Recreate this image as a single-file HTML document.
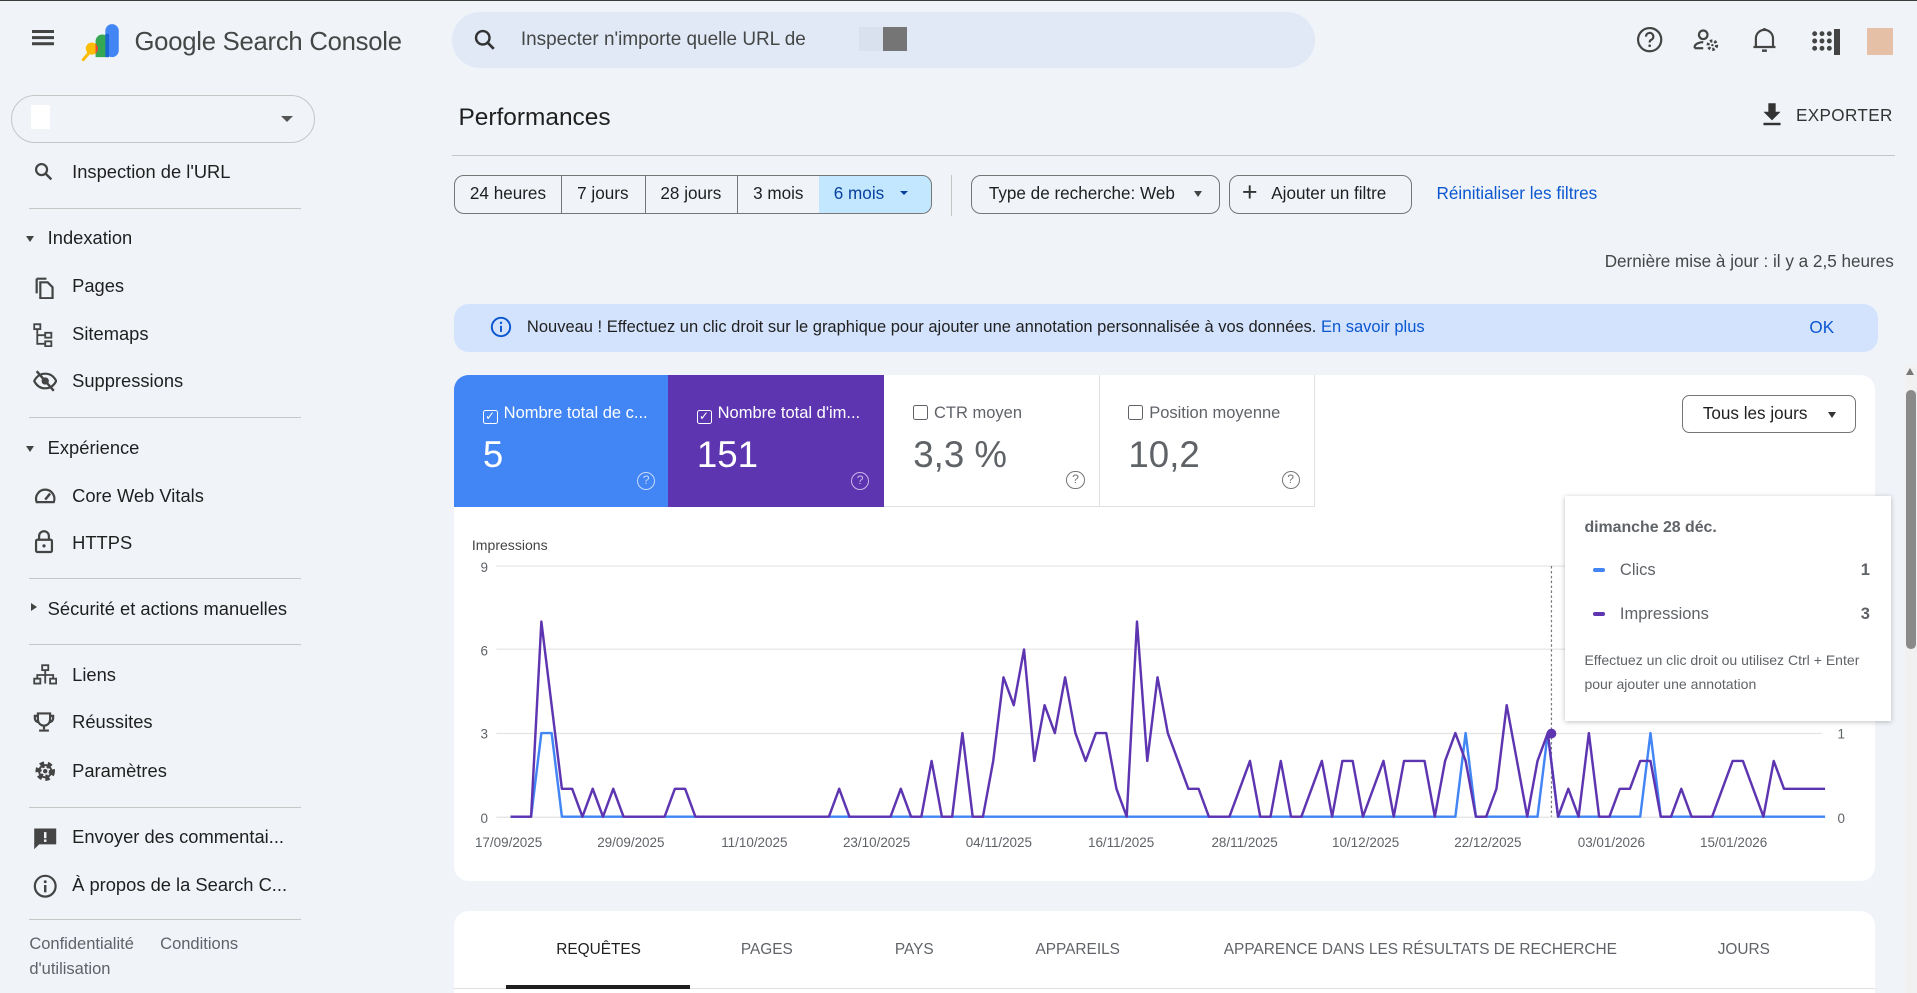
<!DOCTYPE html>
<html><head><meta charset="utf-8">
<style>
*{box-sizing:border-box;margin:0;padding:0}
html,body{width:1917px;height:993px;overflow:hidden;background:#f0f4f9}
#w{width:1568px;height:812px;zoom:1.22258;position:relative;font-family:"Liberation Sans",Arial,sans-serif;color:#1f1f1f;background:#f0f4f9;border-top:1px solid #3c3c3c}
.a{position:absolute}
.nav{position:absolute;left:59px;font-size:15px;color:#1f1f1f}
.ic{position:absolute;left:27px}
.hr{position:absolute;left:24px;width:222px;height:1px;background:#c7c7c7}
.seg{position:absolute;top:143px;height:32px;border:1px solid #747775;font-size:14px;line-height:30px;text-align:center;color:#1f1f1f}
.tile{position:absolute;top:307px;height:108px;width:177px}
.tile .l{position:absolute;left:24px;top:24px;font-size:13.5px}
.tile .v{position:absolute;left:24px;top:48px;font-size:30px}
.tile .q{position:absolute;right:12px;bottom:14px;width:15px;height:15px;border:1.5px solid;border-radius:50%;font-size:10px;text-align:center;line-height:12px}
.cb{display:inline-block;width:12px;height:12px;border:1.5px solid;border-radius:2px;vertical-align:-1px;margin-right:5px;font-size:10px;line-height:9px;text-align:center}
.tab{position:absolute;top:769px;font-size:12.6px;color:#5f6368;font-weight:500}
</style></head><body><div id="w">
<div class="a" style="left:26px;top:24px;width:18px;height:2px;background:#444;box-shadow:0 5px 0 #444,0 10px 0 #444"></div>
<svg class="a" style="left:62px;top:14px" width="40" height="38" viewBox="62 14 40 38">
<rect x="86" y="19" width="11" height="27" rx="5.5" fill="#4285f4"/>
<path d="M78 33a5.5 5.5 0 0 1 11 0v13h-11z" fill="#34a853"/>
<rect x="86" y="27" width="3" height="19" fill="#1967d2"/>
<line x1="74" y1="41" x2="68" y2="48" stroke="#fbbc04" stroke-width="2.5" stroke-linecap="round"/>
<circle cx="75" cy="39" r="5" fill="#fbbc04"/>
<path d="M78 35a5 5 0 0 1 0 8z" fill="#ea4335"/>
</svg>
<div class="a" style="left:110px;top:22px;font-size:21px;color:#444746;letter-spacing:-0.2px">Google Search Console</div>
<div class="a" style="left:370px;top:9px;width:706px;height:46px;border-radius:23px;background:#e1e9f7"></div>
<svg class="a" style="left:387px;top:22px" width="20" height="20" viewBox="0 0 20 20"><circle cx="8" cy="8" r="5.5" fill="none" stroke="#333" stroke-width="2"/><line x1="12" y1="12" x2="17" y2="17" stroke="#333" stroke-width="2.2"/></svg>
<div class="a" style="left:426px;top:23px;font-size:15.5px;color:#444746">Inspecter n'importe quelle URL de</div>
<div class="a" style="left:703px;top:21px;width:19px;height:20px;background:#d9e1ee"></div>
<div class="a" style="left:722px;top:21px;width:20px;height:20px;background:#757575"></div>
<svg class="a" style="left:1337px;top:20px" width="24" height="24" viewBox="0 0 24 24"><circle cx="12" cy="12" r="9.5" fill="none" stroke="#444" stroke-width="1.8"/><path d="M9 9.5a3 3 0 1 1 4 2.8c-.8.4-1 1-1 2" fill="none" stroke="#444" stroke-width="1.8"/><circle cx="12" cy="17" r="1.1" fill="#444"/></svg>
<svg class="a" style="left:1383px;top:20px" width="26" height="24" viewBox="0 0 26 24"><circle cx="10" cy="8" r="3.5" fill="none" stroke="#444" stroke-width="1.8"/><path d="M3 19v-1c0-2.5 4-4 7-4" fill="none" stroke="#444" stroke-width="1.8"/><path d="M3 19h7" stroke="#444" stroke-width="1.8"/><circle cx="17.5" cy="16.5" r="3.5" fill="none" stroke="#444" stroke-width="2.5" stroke-dasharray="2 1.6"/><circle cx="17.5" cy="16.5" r="1" fill="#444"/></svg>
<svg class="a" style="left:1432px;top:20px" width="22" height="24" viewBox="0 0 22 24"><path d="M4 18V11a7 7 0 0 1 14 0v7zM2 18h18" fill="none" stroke="#444" stroke-width="1.8"/><path d="M9 21h4" stroke="#444" stroke-width="2"/><path d="M11 4V2.5" stroke="#444" stroke-width="2"/></svg>
<svg class="a" style="left:1481px;top:24px" width="20" height="20" viewBox="0 0 20 20" fill="#444"><circle cx="3" cy="3" r="2"/><circle cx="9" cy="3" r="2"/><circle cx="15" cy="3" r="2"/><circle cx="3" cy="9" r="2"/><circle cx="9" cy="9" r="2"/><circle cx="15" cy="9" r="2"/><circle cx="3" cy="15" r="2"/><circle cx="9" cy="15" r="2"/><circle cx="15" cy="15" r="2"/></svg>
<div class="a" style="left:1500px;top:23px;width:5px;height:21px;background:#444"></div>
<div class="a" style="left:1527px;top:22px;width:21px;height:22px;background:#e5bfa6"></div>
<div class="a" style="left:9px;top:77px;width:249px;height:39px;border:1px solid #c4c7c5;border-radius:20px"></div>
<div class="a" style="left:25px;top:85px;width:16px;height:20px;background:#fff"></div>
<div class="a" style="left:230px;top:94px;border:5px solid transparent;border-top:5px solid #555"></div>
<svg class="ic" style="top:131px" width="18" height="18" viewBox="0 0 18 18"><circle cx="7" cy="7" r="4.5" fill="none" stroke="#444" stroke-width="1.8"/><line x1="10.5" y1="10.5" x2="15" y2="15" stroke="#444" stroke-width="2"/></svg>
<div class="nav" style="top:131px">Inspection de l'URL</div>
<div class="hr" style="top:169px"></div>
<div class="a" style="left:21px;top:192px;border:4px solid transparent;border-top:5px solid #444"></div>
<div class="nav" style="left:39px;top:185px">Indexation</div>
<svg class="ic" style="top:224px" width="18" height="20" viewBox="0 0 18 20"><path d="M3 3v12M3 3h8" fill="none" stroke="#444" stroke-width="1.8"/><path d="M6 6h6l4 4v9H6z" fill="none" stroke="#444" stroke-width="1.8"/></svg>
<div class="nav" style="top:224px">Pages</div>
<svg class="ic" style="top:263px" width="18" height="20" viewBox="0 0 18 20"><rect x="1" y="1" width="5" height="4" fill="none" stroke="#444" stroke-width="1.5"/><rect x="10" y="8" width="5" height="4" fill="none" stroke="#444" stroke-width="1.5"/><rect x="10" y="15" width="5" height="4" fill="none" stroke="#444" stroke-width="1.5"/><path d="M3.5 5v12H10M3.5 10H10" fill="none" stroke="#444" stroke-width="1.5"/></svg>
<div class="nav" style="top:263px">Sitemaps</div>
<svg class="ic" style="top:302px" width="20" height="18" viewBox="0 0 20 18"><path d="M1 9c2-4 5-6 9-6s7 2 9 6c-2 4-5 6-9 6s-7-2-9-6z" fill="none" stroke="#444" stroke-width="1.8"/><circle cx="10" cy="9" r="3" fill="#444"/><line x1="3" y1="1" x2="17" y2="17" stroke="#444" stroke-width="2"/></svg>
<div class="nav" style="top:302px">Suppressions</div>
<div class="hr" style="top:340px"></div>
<div class="a" style="left:21px;top:364px;border:4px solid transparent;border-top:5px solid #444"></div>
<div class="nav" style="left:39px;top:357px">Expérience</div>
<svg class="ic" style="top:396px" width="20" height="18" viewBox="0 0 20 18"><path d="M3 14a7.5 7.5 0 1 1 14 0z" fill="none" stroke="#444" stroke-width="1.8"/><path d="M10 12l4-5" stroke="#444" stroke-width="2"/></svg>
<div class="nav" style="top:396px">Core Web Vitals</div>
<svg class="ic" style="top:433px" width="18" height="20" viewBox="0 0 18 20"><path d="M5 8V5a4 4 0 0 1 8 0v3" fill="none" stroke="#444" stroke-width="1.8"/><rect x="2.5" y="8" width="13" height="10" rx="1" fill="none" stroke="#444" stroke-width="1.8"/><circle cx="9" cy="13" r="1.3" fill="#444"/></svg>
<div class="nav" style="top:434px">HTTPS</div>
<div class="hr" style="top:472px"></div>
<div class="a" style="left:25px;top:492px;border:4px solid transparent;border-left:5px solid #444"></div>
<div class="nav" style="left:39px;top:488px">Sécurité et actions manuelles</div>
<div class="hr" style="top:526px"></div>
<svg class="ic" style="top:542px" width="20" height="18" viewBox="0 0 20 18"><rect x="7.5" y="1" width="5" height="4" fill="none" stroke="#444" stroke-width="1.5"/><rect x="1" y="12" width="5" height="4" fill="none" stroke="#444" stroke-width="1.5"/><rect x="14" y="12" width="5" height="4" fill="none" stroke="#444" stroke-width="1.5"/><path d="M10 5v4M3.5 12V9h13v3M10 9v7" fill="none" stroke="#444" stroke-width="1.5"/></svg>
<div class="nav" style="top:542px">Liens</div>
<svg class="ic" style="top:581px" width="18" height="18" viewBox="0 0 18 18"><path d="M4 2h10v5a5 5 0 0 1-10 0zM4 4H1.5v2a3 3 0 0 0 3 3M14 4h2.5v2a3 3 0 0 1-3 3M9 12v3M5 16h8" fill="none" stroke="#444" stroke-width="1.8"/></svg>
<div class="nav" style="top:581px">Réussites</div>
<svg class="ic" style="top:620px" width="20" height="20" viewBox="0 0 20 20"><circle cx="10" cy="10" r="5.5" fill="none" stroke="#444" stroke-width="5" stroke-dasharray="3 2.5"/><circle cx="10" cy="10" r="5" fill="none" stroke="#444" stroke-width="1.6"/><circle cx="10" cy="10" r="1.8" fill="#444"/></svg>
<div class="nav" style="top:621px">Paramètres</div>
<div class="hr" style="top:659px"></div>
<svg class="ic" style="top:675px" width="20" height="20" viewBox="0 0 20 20"><path d="M1 2h18v13H5l-4 4z" fill="#444"/><rect x="9" y="5" width="2" height="5" fill="#f0f4f9"/><rect x="9" y="11" width="2" height="2" fill="#f0f4f9"/></svg>
<div class="nav" style="top:675px">Envoyer des commentai...</div>
<svg class="ic" style="top:714px" width="20" height="20" viewBox="0 0 20 20"><circle cx="10" cy="10" r="8.5" fill="none" stroke="#444" stroke-width="1.8"/><rect x="9" y="9" width="2" height="6" fill="#444"/><circle cx="10" cy="6.3" r="1.2" fill="#444"/></svg>
<div class="nav" style="top:714px">À propos de la Search C...</div>
<div class="hr" style="top:751px"></div>
<div class="a" style="left:24px;top:764px;font-size:13.5px;color:#5f6368">Confidentialité</div>
<div class="a" style="left:131px;top:764px;font-size:13.5px;color:#5f6368">Conditions</div>
<div class="a" style="left:24px;top:784px;font-size:13.5px;color:#5f6368">d'utilisation</div>
<div class="a" style="left:375px;top:84px;font-size:20px;color:#1f1f1f">Performances</div>
<svg class="a" style="left:1440px;top:83px" width="18" height="20" viewBox="0 0 18 20"><path d="M6 1h6v7h4l-7 7-7-7h4z" fill="#333"/><rect x="2" y="17" width="14" height="2" fill="#333"/></svg>
<div class="a" style="left:1469px;top:86px;font-size:14px;color:#333;letter-spacing:.3px">EXPORTER</div>
<div class="a" style="left:370px;top:126px;width:1180px;height:1px;background:#c4c7c5"></div>
<div class="seg" style="left:371px;width:89px;border-radius:8px 0 0 8px;top:142px">24 heures</div>
<div class="seg" style="left:459px;width:69px;border-left:none;top:142px">7 jours</div>
<div class="seg" style="left:527px;width:77px;border-left:none;top:142px">28 jours</div>
<div class="seg" style="left:603px;width:68px;border-left:none;top:142px">3 mois</div>
<div class="seg" style="left:670px;width:92px;border-left:none;border-radius:0 8px 8px 0;background:#c2e7ff;color:#0842a0;text-align:left;padding-left:12px;top:142px">6 mois<span style="position:absolute;left:66px;top:13px;border:4px solid transparent;border-top:4px solid #0842a0"></span></div>
<div class="a" style="left:778px;top:142px;width:1px;height:34px;background:#c4c7c5"></div>
<div class="seg" style="left:794px;width:204px;border-radius:8px;text-align:left;padding-left:14px;top:142px">Type de recherche: Web<span style="position:absolute;left:182px;top:13px;border:4px solid transparent;border-top:5px solid #444"></span></div>
<div class="seg" style="left:1005px;width:150px;border-radius:8px;text-align:left;padding-left:34px;top:142px"><span style="position:absolute;left:10px;top:-1px;font-size:22px;color:#333">+</span>Ajouter un filtre</div>
<div class="a" style="left:1175px;top:150px;font-size:14px;color:#0b57d0">Réinitialiser les filtres</div>
<div class="a" style="right:19px;top:205px;font-size:14px;color:#444746">Dernière mise à jour : il y a 2,5 heures</div>
<div class="a" style="left:371px;top:248px;width:1165px;height:39px;border-radius:12px;background:#d3e3fd"></div>
<svg class="a" style="left:401px;top:258px" width="18" height="18" viewBox="0 0 18 18"><circle cx="9" cy="9" r="7.5" fill="none" stroke="#0b57d0" stroke-width="1.6"/><rect x="8.2" y="8" width="1.6" height="5" fill="#0b57d0"/><circle cx="9" cy="5.6" r="1" fill="#0b57d0"/></svg>
<div class="a" style="left:431px;top:259px;font-size:13.5px;color:#1f1f1f">Nouveau ! Effectuez un clic droit sur le graphique pour ajouter une annotation personnalisée à vos données. <span style="color:#0b57d0">En savoir plus</span></div>
<div class="a" style="left:1480px;top:259px;font-size:14px;color:#0b57d0">OK</div>
<div class="a" style="left:371px;top:306px;width:1163px;height:414px;border-radius:12px;background:#fff"></div>
<div class="tile" style="left:371px;top:306px;background:#4285f4;color:#fff;border-radius:12px 0 0 0"><div class="l"><span class="cb" style="border-color:#fff">✓</span>Nombre total de c...</div><div class="v">5</div><div class="q" style="color:#c6dafc">?</div></div>
<div class="tile" style="left:546px;top:306px;background:#5e35b1;color:#fff"><div class="l"><span class="cb" style="border-color:#fff">✓</span>Nombre total d'im...</div><div class="v">151</div><div class="q" style="color:#c7b6e8">?</div></div>
<div class="tile" style="left:723px;top:306px;border-right:1px solid #e0e0e0;border-bottom:1px solid #e0e0e0;color:#5f6368"><div class="l"><span class="cb" style="border-color:#5f6368"></span>CTR moyen</div><div class="v">3,3 %</div><div class="q" style="color:#777">?</div></div>
<div class="tile" style="left:899px;top:306px;border-right:1px solid #e0e0e0;border-bottom:1px solid #e0e0e0;color:#5f6368"><div class="l"><span class="cb" style="border-color:#5f6368"></span>Position moyenne</div><div class="v">10,2</div><div class="q" style="color:#777">?</div></div>
<div class="a" style="left:1376px;top:322px;width:142px;height:31px;border:1px solid #747775;border-radius:6px;font-size:14px;line-height:29px;padding-left:16px">Tous les jours<span style="position:absolute;left:118px;top:13px;border:4px solid transparent;border-top:5px solid #333"></span></div>
<svg class="a" style="left:0;top:-1px" width="1568" height="812">
<g font-family="Liberation Sans, Arial, sans-serif" font-size="11" fill="#5f6368">
<text x="386" y="450" font-size="11.5" fill="#444">Impressions</text>
<text x="1492" y="450" fill="#ddd">Clics</text>
<text x="393" y="468">9</text><text x="393" y="536">6</text><text x="393" y="604">3</text><text x="393" y="673">0</text>
<text x="1503" y="468" fill="#ccc">3</text><text x="1503" y="604">1</text><text x="1503" y="673">0</text>
<g text-anchor="middle">
<text x="416" y="693">17/09/2025</text><text x="516" y="693">29/09/2025</text><text x="617" y="693">11/10/2025</text><text x="717" y="693">23/10/2025</text><text x="817" y="693">04/11/2025</text><text x="917" y="693">16/11/2025</text><text x="1018" y="693">28/11/2025</text><text x="1117" y="693">10/12/2025</text><text x="1217" y="693">22/12/2025</text><text x="1318" y="693">03/01/2026</text><text x="1418" y="693">15/01/2026</text>
</g></g>
<g stroke="#e3e3e3" stroke-width="1"><line x1="406" y1="463" x2="1490" y2="463"/><line x1="406" y1="531" x2="1490" y2="531"/><line x1="406" y1="600" x2="1490" y2="600"/><line x1="406" y1="668.5" x2="1490" y2="668.5"/></g>
<line x1="1269" y1="463" x2="1269" y2="668" stroke="#777" stroke-dasharray="2 2"/>
<polyline id="pc" fill="none" stroke="#4285f4" stroke-width="2" stroke-linejoin="round"/>
<polyline id="pi" fill="none" stroke="#5e35b1" stroke-width="2" stroke-linejoin="round"/>
<circle cx="1269" cy="600" r="4" fill="#5e35b1"/>
</svg>
<div class="a" style="left:1280px;top:405px;width:267px;height:184px;background:#fff;box-shadow:0 1px 4px rgba(0,0,0,.25);font-size:13.5px;color:#5f6368">
<div class="a" style="left:16px;top:19px;font-weight:bold;font-size:13px">dimanche 28 déc.</div>
<div class="a" style="left:23px;top:59px;width:10px;height:3px;border-radius:2px;background:#4285f4"></div>
<div class="a" style="left:45px;top:53px">Clics</div><div class="a" style="left:242px;top:53px;font-weight:bold">1</div>
<div class="a" style="left:23px;top:95px;width:10px;height:3px;border-radius:2px;background:#5e35b1"></div>
<div class="a" style="left:45px;top:89px">Impressions</div><div class="a" style="left:242px;top:89px;font-weight:bold">3</div>
<div class="a" style="left:16px;top:124px;font-size:11.5px;line-height:20px">Effectuez un clic droit ou utilisez Ctrl + Enter<br>pour ajouter une annotation</div>
</div>
<div class="a" style="left:1558px;top:298px;width:10px;height:514px;background:#f1f1f1"></div>
<div class="a" style="left:1559px;top:318px;width:8px;height:212px;border-radius:4px;background:#8a8a8a"></div>
<div class="a" style="left:1559px;top:300px;border:4px solid transparent;border-bottom:6px solid #777;border-top:none"></div>
<div class="a" style="left:371px;top:744px;width:1163px;height:80px;border-radius:12px;background:#fff"></div>
<div class="a" style="left:371px;top:807px;width:1163px;height:1px;background:#e0e0e0"></div>
<div class="tab" style="left:455px;color:#1f1f1f">REQUÊTES</div>
<div class="a" style="left:414px;top:805px;width:150px;height:3px;background:#1f1f1f"></div>
<div class="tab" style="left:606px">PAGES</div>
<div class="tab" style="left:732px">PAYS</div>
<div class="tab" style="left:847px">APPAREILS</div>
<div class="tab" style="left:1001px">APPARENCE DANS LES RÉSULTATS DE RECHERCHE</div>
<div class="tab" style="left:1405px">JOURS</div>
</div>
<script>
var im={3:7,4:4,5:1,6:1,8:1,10:1,16:1,17:1,32:1,38:1,41:2,44:3,47:2,48:5,49:4,50:6,51:2,52:4,53:3,54:5,55:3,56:2,57:3,58:3,59:1,61:7,62:2,63:5,64:3,65:2,66:1,67:1,71:1,72:2,75:2,78:1,79:2,81:2,82:2,84:1,85:2,87:2,88:2,89:2,91:2,92:3,93:2,96:1,97:4,98:2,100:2,101:3,103:1,105:3,108:1,109:1,110:2,111:2,114:1,118:1,119:2,120:2,121:1,123:2,124:1,125:1,126:1,127:1,128:1};
var cl={3:3,4:3,93:3,101:3,111:3};
function pts(d){var s=[];for(var i=0;i<=128;i++){var v=d[i]||0;s.push((417.6+i*8.4).toFixed(1)+","+(668-v*22.8).toFixed(1));}return s.join(" ");}
document.getElementById("pi").setAttribute("points",pts(im));
document.getElementById("pc").setAttribute("points",pts(cl));
</script>
</body></html>
